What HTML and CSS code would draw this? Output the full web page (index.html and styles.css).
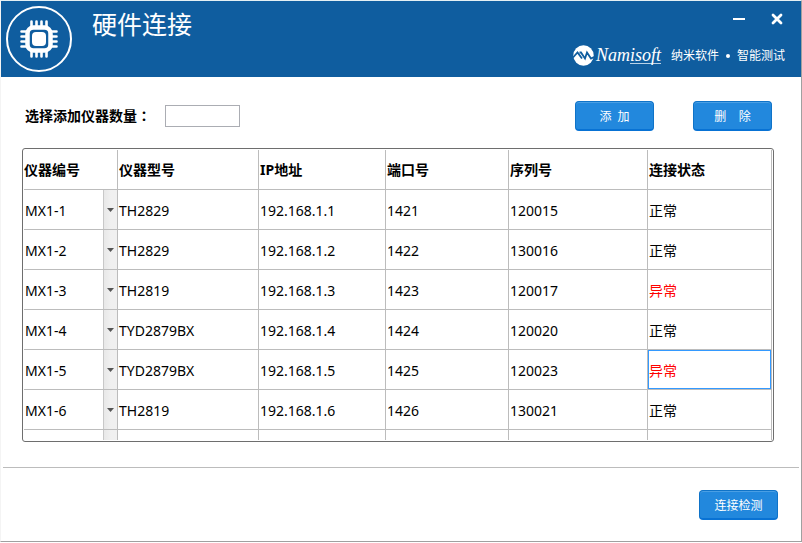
FILE: index.html
```html
<!DOCTYPE html>
<html lang="zh-CN">
<head>
    <meta charset="UTF-8">
    <title>硬件连接</title>
    <link rel="stylesheet" href="styles.css">
</head>
<body>
<div class="window">
    <div class="header">
        <svg class="chip" viewBox="0 0 66 66" width="66" height="66">
            <circle cx="33" cy="33" r="32" fill="none" stroke="#fff" stroke-width="2"/>
            <path d="M25.5 15.5V50.5M30.5 15.5V50.5M35.5 15.5V50.5M40.5 15.5V50.5M15.5 25.5H50.5M15.5 30.5H50.5M15.5 35.5H50.5M15.5 40.5H50.5" stroke="#fff" stroke-width="2.6" stroke-linecap="round"/>
            <rect x="21.5" y="21.5" width="23" height="23" rx="6" fill="#0f5d9f" stroke="#fff" stroke-width="4.5"/>
            <rect x="26" y="26" width="14" height="14" rx="4" fill="#fff"/>
        </svg>
        <h1 class="title">硬件连接</h1>
        <div class="right">
            <div class="winbtns">
                <button class="winbtn" aria-label="最小化">
                    <svg viewBox="0 0 12 12" width="12" height="12"><path d="M0 6H12" stroke="#fff" stroke-width="2"/></svg>
                </button>
                <button class="winbtn" aria-label="关闭">
                    <svg viewBox="0 0 12 12" width="12" height="12"><path d="M2 2L10 10M10 2L2 10" stroke="#fff" stroke-width="2.8" stroke-linecap="round"/></svg>
                </button>
            </div>
            <div class="brand">
                <svg class="logo" viewBox="0 0 21 21" width="21" height="21">
                    <circle cx="10.5" cy="10.5" r="10.2" fill="#fff"/>
                    <path d="M0 12.5L4.5 7.5L9 13.5M6.5 7.5H8L12 13.5L14 7.5L18 13.5L21 12" fill="none" stroke="#0f5d9f" stroke-width="1.8"/>
                </svg>
                <span class="name">Nam<span class="line">isoft</span></span>
                <span class="slogan"><span>纳米软件</span><i class="dot"></i><span>智能测试</span></span>
            </div>
        </div>
    </div>

    <div class="toolbar">
        <label class="label" for="num">选择添加仪器数量<span class="colon" lang="zh-TW">：</span></label>
        <input class="num" id="num" type="text">
        <div class="btns">
            <button class="btn">添&nbsp; 加</button>
            <button class="btn">删&nbsp; &nbsp; 除</button>
        </div>
    </div>

    <div class="grid">
        <table class="table">
            <colgroup>
                <col class="c1"><col class="c2"><col class="c3"><col class="c4"><col class="c5"><col class="c6">
            </colgroup>
            <thead>
                <tr><th>仪器编号</th><th>仪器型号</th><th>IP地址</th><th>端口号</th><th>序列号</th><th>连接状态</th></tr>
            </thead>
            <tbody>
                <tr>
                    <td class="pick"><select aria-label="仪器编号"><option>MX1-1</option></select></td>
                    <td>TH2829</td><td>192.168.1.1</td><td>1421</td><td>120015</td><td>正常</td>
                </tr>
                <tr>
                    <td class="pick"><select aria-label="仪器编号"><option>MX1-2</option></select></td>
                    <td>TH2829</td><td>192.168.1.2</td><td>1422</td><td>130016</td><td>正常</td>
                </tr>
                <tr>
                    <td class="pick"><select aria-label="仪器编号"><option>MX1-3</option></select></td>
                    <td>TH2819</td><td>192.168.1.3</td><td>1423</td><td>120017</td><td class="error">异常</td>
                </tr>
                <tr>
                    <td class="pick"><select aria-label="仪器编号"><option>MX1-4</option></select></td>
                    <td>TYD2879BX</td><td>192.168.1.4</td><td>1424</td><td>120020</td><td>正常</td>
                </tr>
                <tr>
                    <td class="pick"><select aria-label="仪器编号"><option>MX1-5</option></select></td>
                    <td>TYD2879BX</td><td>192.168.1.5</td><td>1425</td><td>120023</td><td class="error active">异常</td>
                </tr>
                <tr>
                    <td class="pick"><select aria-label="仪器编号"><option>MX1-6</option></select></td>
                    <td>TH2819</td><td>192.168.1.6</td><td>1426</td><td>130021</td><td>正常</td>
                </tr>
                <tr class="rest">
                    <td class="strip"></td><td></td><td></td><td></td><td></td><td></td>
                </tr>
            </tbody>
        </table>
    </div>

    <div class="footer">
        <button class="btn">连接检测</button>
    </div>
</div>
</body>
</html>
```
FILE: styles.css
```css
*{
    margin: 0;
    padding: 0;
    box-sizing: border-box;
}
body{
    background: #fff;
    color: #000;
    font: 14px/20px "Noto Sans", "Noto Sans CJK SC", sans-serif;
}
button, input, select{
    font: inherit;
    color: inherit;
}
.window{
    min-height: calc(100vh - 1px);
    border: 1px solid #a0a0a0;
    border-top-color: #e4f0f4;
    border-left-color: #f4f4f4;
}
/* 顶部标题栏 */
.header{
    display: flex;
    height: 76px;
    padding: 5px 16px 0 5px;
    background: #0f5d9f;
    color: #fff;
}
.title{
    margin-left: 20px;
    font-size: 25px;
    line-height: 36px;
    font-weight: 400;
}
.right{
    margin-left: auto;
    display: flex;
    flex-direction: column;
    align-items: flex-end;
    gap: 12px;
}
.winbtns{
    display: flex;
    gap: 18px;
    padding-top: 1px;
}
.winbtn{
    display: flex;
    align-items: center;
    justify-content: center;
    width: 24px;
    height: 24px;
    margin-right: -4px;
    border: none;
    background: none;
}
.brand{
    display: flex;
    align-items: center;
    height: 24px;
}
.logo{
    margin-right: 2px;
}
.name{
    font: italic 18px/20px "Liberation Serif", serif;
    margin-right: 10px;
}
.line{
    display: inline-block;
    height: 19px;
    border-bottom: 1px solid #b8d2e8;
}
.slogan{
    display: flex;
    align-items: center;
    gap: 7px;
    padding-top: 2px;
    font-size: 12px;
}
.dot{
    width: 4px;
    height: 4px;
    border-radius: 2px;
    background: #fff;
}
/* 操作区 */
.toolbar{
    display: flex;
    align-items: center;
    height: 30px;
    margin: 24px 29px 17px 24px;
}
.label{
    font-weight: bold;
}
.colon{
    font-family: "Noto Sans CJK TC", sans-serif;
    line-height: 1;
}
.num{
    width: 75px;
    height: 22px;
    margin-left: 14px;
    padding: 0 4px;
    border: 1px solid #abadb3;
}
.btns{
    display: flex;
    gap: 39px;
    margin-left: auto;
}
.btn{
    width: 79px;
    height: 30px;
    padding-top: 2px;
    border: 1px solid #0f73c8;
    border-bottom: 2px solid #0872d4;
    border-radius: 4px;
    background: #2288dd;
    box-shadow: inset 0 1px #4a9fe4;
    color: #fff;
    font-size: 12px;
}
/* 仪器列表 */
.grid{
    margin: 0 27px 0 21px;
    padding: 1px;
    border: 1px solid #6e6e6e;
    border-radius: 3px;
}
.table{
    width: 100%;
    table-layout: fixed;
    border-collapse: separate;
    border-spacing: 0;
}
.c1{width: 94px;}
.c2{width: 141px;}
.c3{width: 127px;}
.c4{width: 123px;}
.c5{width: 139px;}
.c6{width: 124px;}
th, td{
    height: 40px;
    padding: 2px 1px 0;
    border-right: 1px solid #bcbcbc;
    border-bottom: 1px solid #bcbcbc;
    text-align: left;
}
th{
    padding-top: 0;
    font-weight: bold;
}
th:first-child{
    padding-left: 0;
}
.pick{
    padding: 0;
}
.pick select{
    display: block;
    width: 100%;
    height: 39px;
    padding: 2px 15px 0 1px;
    border: none;
    border-radius: 0;
    appearance: none;
    background:
        url("data:image/svg+xml,%3Csvg xmlns='http://www.w3.org/2000/svg' width='7' height='4'%3E%3Cpath d='M0 0H7L3.5 4Z' fill='%23555'/%3E%3C/svg%3E") no-repeat right 3px top 18px,
        linear-gradient(to right, #c8c8c8 1px, #e8e8e8 1px, #f0f0f0 8px) no-repeat right / 14px 100%;
}
.error{
    color: #f00;
}
.active{
    box-shadow: inset 0 0 0 1px #3399ff;
}
.rest td{
    height: 10px;
    padding: 0;
    border-bottom: none;
}
.rest .strip{
    background: linear-gradient(to right, #c8c8c8 1px, #e8e8e8 1px, #f0f0f0 8px) no-repeat right / 14px 100%;
}
/* 底部 */
.footer{
    display: flex;
    justify-content: flex-end;
    margin: 25px 2px 0;
    padding: 22px 21px 21px;
    border-top: 1px solid #bcbcbc;
}
```
